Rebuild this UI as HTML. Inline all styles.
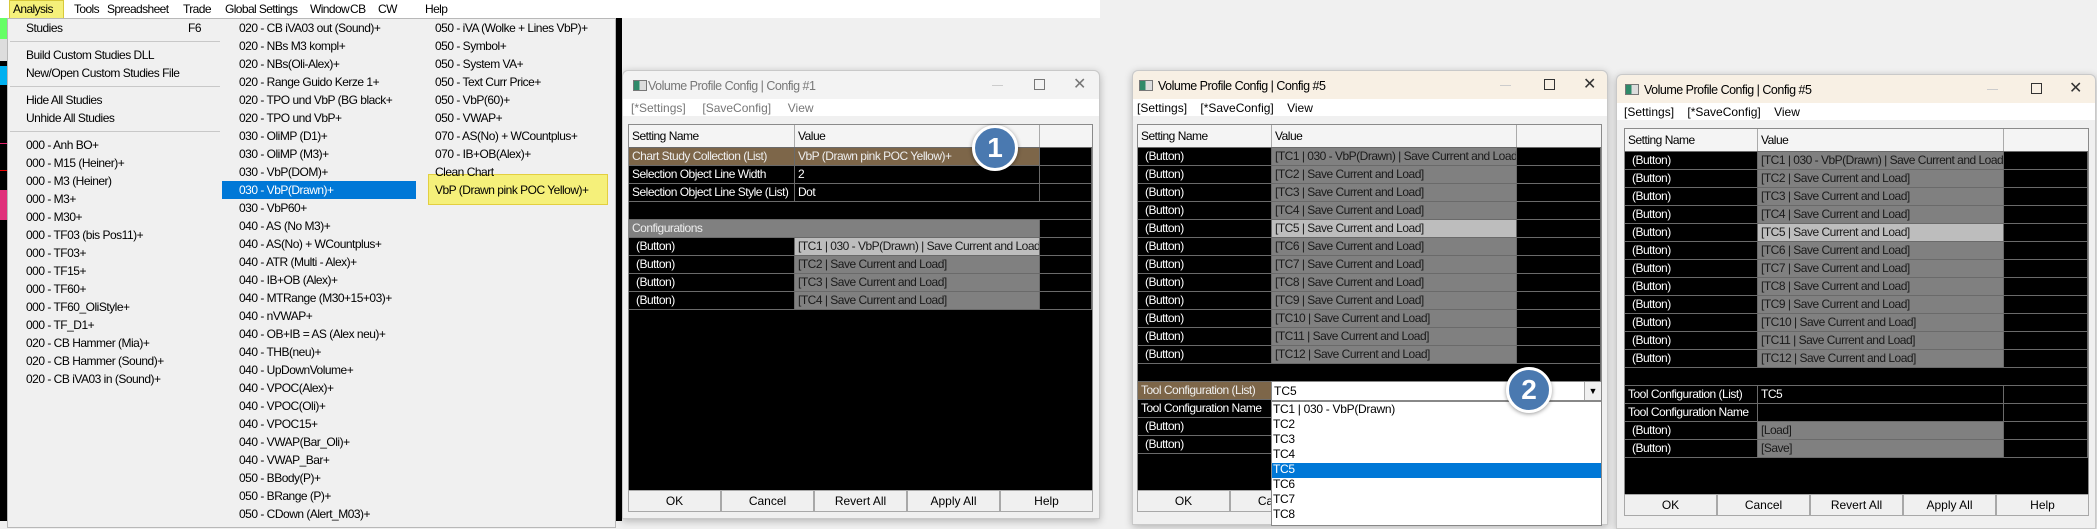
<!DOCTYPE html>
<html><head><meta charset="utf-8"><style>
*{box-sizing:border-box;margin:0;padding:0}
body{width:2097px;height:521px;background:#f0f0f0;position:relative;overflow:hidden;font-family:"Liberation Sans",Arial,sans-serif;font-size:12px;color:#000}
.a{position:absolute;white-space:nowrap}
.mb{left:0;top:0;width:1100px;height:18px;background:#fff}
.mi{top:2px;font-size:12px;letter-spacing:-0.6px}
.dd{left:7px;top:18px;width:609px;height:510px;background:#f0f0f0;border:1px solid #b8b8b8}
.it{font-size:12px;letter-spacing:-0.5px;line-height:18px;height:18px}
.ml{font-size:12px;letter-spacing:-0.5px;line-height:18px;white-space:pre}
.sep{height:1px;background:#c8c8c8;left:10px;width:210px}
.win{background:#f0f0f0;border:1px solid #c9c9c9;border-radius:6px 6px 0 0;box-shadow:0 2px 8px rgba(0,0,0,.25)}
.tb{position:absolute;left:0;right:0;top:0;height:30px;border-radius:6px 6px 0 0}
.tt{font-size:12.5px;letter-spacing:-0.5px}
.menu{position:absolute;left:0;right:0;height:17px;background:#fff}
.tbl{position:absolute;background:#000;border:1px solid #8a8a8a;letter-spacing:-0.5px}
.r{display:flex;height:18px;border-bottom:1px solid #6a6a6a}
.r div{height:17px;line-height:17px;padding-left:3px;overflow:hidden;white-space:nowrap;border-right:1px solid #6a6a6a}
.hd{background:#f4f4f4;height:23px!important}
.hd div{height:22px;line-height:22px;color:#000;border-right:1px solid #aaa}
.k{background:#000;color:#fff}
.bn{padding-left:7px!important}
.g{background:#808080;color:#1a1a1a}
.lg{background:#bdbdbd;color:#1a1a1a}
.br{background:#7d6649;color:#eee}
.btns{position:absolute;display:flex;height:22px}
.btns div{flex:1;background:#f0f0f0;border:1px solid #a8a8a8;text-align:center;line-height:20px;font-size:12px}
.badge{position:absolute;width:46px;height:46px;border-radius:50%;background:#4a79b0;border:3px solid #fff;box-shadow:0 1px 4px rgba(0,0,0,.4);color:#fff;font-weight:bold;font-size:28px;text-align:center;line-height:40px}
.ic{position:absolute;width:14px;height:11px;border:1px solid #777;background:linear-gradient(90deg,#2f8a6a 0 45%,#ddd 45%)}
.mx{position:absolute;width:11px;height:11px;border:1px solid #333}
.cl{position:absolute;font-size:16px;color:#333;line-height:16px}
.mn{position:absolute;width:11px;height:1px;background:#ccc}
</style></head><body>

<div class="a" style="left:0;top:18px;width:8px;height:503px;background:#000"></div>
<div class="a" style="left:0;top:18px;width:8px;height:21px;background:#6f6"></div>
<div class="a" style="left:0;top:39px;width:8px;height:22px;background:#ddd"></div>
<div class="a" style="left:0;top:66px;width:8px;height:19px;background:#00b0f0"></div>
<div class="a" style="left:0;top:143px;width:8px;height:1px;background:#e0206a"></div>
<div class="a" style="left:0;top:170px;width:8px;height:1px;background:#e00"></div>
<div class="a" style="left:0;top:190px;width:8px;height:30px;background:#e0307a"></div>
<div class="a" style="left:616px;top:18px;width:6px;height:503px;background:#000"></div>

<div class="a mb"></div>
<div class="a" style="left:9px;top:0;width:55px;height:19px;background:#f5f07a;border:1px solid #d8c93a"></div>
<div class="a mi" style="left:13px">Analysis</div>
<div class="a mi" style="left:74px">Tools</div>
<div class="a mi" style="left:107px">Spreadsheet</div>
<div class="a mi" style="left:183px">Trade</div>
<div class="a mi" style="left:225px">Global Settings</div>
<div class="a mi" style="left:310px">Window</div>
<div class="a mi" style="left:350px">CB</div>
<div class="a mi" style="left:378px">CW</div>
<div class="a mi" style="left:425px">Help</div>

<div class="a dd"></div>
<div class="a it" style="left:26px;top:19px">Studies</div>
<div class="a it" style="left:188px;top:19px">F6</div>
<div class="a sep" style="top:41px"></div>
<div class="a it" style="left:26px;top:46px">Build Custom Studies DLL</div>
<div class="a it" style="left:26px;top:64px">New/Open Custom Studies File</div>
<div class="a sep" style="top:86px"></div>
<div class="a it" style="left:26px;top:91px">Hide All Studies</div>
<div class="a it" style="left:26px;top:109px">Unhide All Studies</div>
<div class="a sep" style="top:131px"></div>
<div class="a ml" style="left:26px;top:136px">000 - Anh BO+
000 - M15 (Heiner)+
000 - M3 (Heiner)
000 - M3+
000 - M30+
000 - TF03 (bis Pos11)+
000 - TF03+
000 - TF15+
000 - TF60+
000 - TF60_OliStyle+
000 - TF_D1+
020 - CB Hammer (Mia)+
020 - CB Hammer (Sound)+
020 - CB iVA03 in (Sound)+</div>
<div class="a" style="left:222px;top:181px;width:194px;height:18px;background:#0078d7"></div>
<div class="a ml" style="left:239px;top:19px">020 - CB iVA03 out (Sound)+
020 - NBs M3 kompl+
020 - NBs(Oli-Alex)+
020 - Range Guido Kerze 1+
020 - TPO und VbP (BG black+
020 - TPO und VbP+
030 - OliMP (D1)+
030 - OliMP (M3)+
030 - VbP(DOM)+
<span style="color:#fff">030 - VbP(Drawn)+</span>
030 - VbP60+
040 - AS (No M3)+
040 - AS(No) + WCountplus+
040 - ATR (Multi - Alex)+
040 - IB+OB (Alex)+
040 - MTRange (M30+15+03)+
040 - nVWAP+
040 - OB+IB = AS (Alex neu)+
040 - THB(neu)+
040 - UpDownVolume+
040 - VPOC(Alex)+
040 - VPOC(Oli)+
040 - VPOC15+
040 - VWAP(Bar_Oli)+
040 - VWAP_Bar+
050 - BBody(P)+
050 - BRange (P)+
050 - CDown (Alert_M03)+</div>
<div class="a" style="left:428px;top:174px;width:180px;height:31px;background:#f5f07a;border:1px solid #e3cf40"></div>
<div class="a ml" style="left:435px;top:19px">050 - iVA (Wolke + Lines VbP)+
050 - Symbol+
050 - System VA+
050 - Text Curr Price+
050 - VbP(60)+
050 - VWAP+
070 - AS(No) + WCountplus+
070 - IB+OB(Alex)+
Clean Chart
VbP (Drawn pink POC Yellow)+</div>

<!-- WINDOW 1 -->
<div class="a win" style="left:622px;top:70px;width:478px;height:449px">
 <div class="tb" style="background:#f3f3f3"></div>
 <div class="ic" style="left:10px;top:9px"></div>
 <div class="a tt" style="left:25px;top:8px;color:#777">Volume Profile Config | Config #1</div>
 <div class="mn" style="left:369px;top:14px"></div>
 <div class="mx" style="left:411px;top:8px;border-color:#777"></div>
 <div class="cl" style="left:450px;top:6px;color:#777">✕</div>
 <div class="menu" style="top:28px"></div>
 <div class="a" style="left:8px;top:30px;color:#777">[*Settings]&nbsp;&nbsp;&nbsp;&nbsp;&nbsp;[SaveConfig]&nbsp;&nbsp;&nbsp;&nbsp;&nbsp;View</div>
</div>
<div class="tbl" style="left:628px;top:124px;width:465px;height:367px">
 <div class="r hd"><div style="width:166px">Setting Name</div><div style="width:245px">Value</div><div style="flex:1;border:0"></div></div>
 <div class="r"><div class="br" style="width:166px">Chart Study Collection (List)</div><div class="br" style="width:245px">VbP (Drawn pink POC Yellow)+</div><div class="k" style="flex:1"></div></div>
 <div class="r"><div class="k" style="width:166px">Selection Object Line Width</div><div class="k" style="width:245px">2</div><div class="k" style="flex:1"></div></div>
 <div class="r"><div class="k" style="width:166px">Selection Object Line Style (List)</div><div class="k" style="width:245px">Dot</div><div class="k" style="flex:1"></div></div>
 <div class="r"><div class="k" style="flex:1"></div></div>
 <div class="r"><div class="g" style="width:411px;color:#eee">Configurations</div><div class="k" style="flex:1"></div></div>
 <div class="r"><div class="k bn" style="width:166px">(Button)</div><div class="lg" style="width:245px">[TC1 | 030 - VbP(Drawn) | Save Current and Load]</div><div class="k" style="flex:1"></div></div>
 <div class="r"><div class="k bn" style="width:166px">(Button)</div><div class="g" style="width:245px">[TC2 | Save Current and Load]</div><div class="k" style="flex:1"></div></div>
 <div class="r"><div class="k bn" style="width:166px">(Button)</div><div class="g" style="width:245px">[TC3 | Save Current and Load]</div><div class="k" style="flex:1"></div></div>
 <div class="r"><div class="k bn" style="width:166px">(Button)</div><div class="g" style="width:245px">[TC4 | Save Current and Load]</div><div class="k" style="flex:1"></div></div>
</div>
<div class="btns" style="left:628px;top:490px;width:465px"><div>OK</div><div>Cancel</div><div>Revert All</div><div>Apply All</div><div>Help</div></div>
<div class="badge" style="left:972px;top:125px">1</div>

<!-- WINDOW 2 -->
<div class="a win" style="left:1132px;top:70px;width:476px;height:455px">
 <div class="tb" style="background:#f8f0e4"></div>
 <div class="ic" style="left:6px;top:9px"></div>
 <div class="a tt" style="left:25px;top:8px">Volume Profile Config | Config #5</div>
 <div class="mn" style="left:367px;top:14px"></div>
 <div class="mx" style="left:411px;top:8px"></div>
 <div class="cl" style="left:450px;top:6px">✕</div>
 <div class="menu" style="top:28px"></div>
 <div class="a" style="left:4px;top:30px">[Settings]&nbsp;&nbsp;&nbsp;&nbsp;[*SaveConfig]&nbsp;&nbsp;&nbsp;&nbsp;View</div>
</div>
<div class="tbl" style="left:1137px;top:124px;width:465px;height:367px">
 <div class="r hd"><div style="width:134px">Setting Name</div><div style="width:245px">Value</div><div style="flex:1;border:0"></div></div>
 <div class="r"><div class="k bn" style="width:134px">(Button)</div><div class="g" style="width:245px">[TC1 | 030 - VbP(Drawn) | Save Current and Load]</div><div class="k" style="flex:1"></div></div>
 <div class="r"><div class="k bn" style="width:134px">(Button)</div><div class="g" style="width:245px">[TC2 | Save Current and Load]</div><div class="k" style="flex:1"></div></div>
 <div class="r"><div class="k bn" style="width:134px">(Button)</div><div class="g" style="width:245px">[TC3 | Save Current and Load]</div><div class="k" style="flex:1"></div></div>
 <div class="r"><div class="k bn" style="width:134px">(Button)</div><div class="g" style="width:245px">[TC4 | Save Current and Load]</div><div class="k" style="flex:1"></div></div>
 <div class="r"><div class="k bn" style="width:134px">(Button)</div><div class="lg" style="width:245px">[TC5 | Save Current and Load]</div><div class="k" style="flex:1"></div></div>
 <div class="r"><div class="k bn" style="width:134px">(Button)</div><div class="g" style="width:245px">[TC6 | Save Current and Load]</div><div class="k" style="flex:1"></div></div>
 <div class="r"><div class="k bn" style="width:134px">(Button)</div><div class="g" style="width:245px">[TC7 | Save Current and Load]</div><div class="k" style="flex:1"></div></div>
 <div class="r"><div class="k bn" style="width:134px">(Button)</div><div class="g" style="width:245px">[TC8 | Save Current and Load]</div><div class="k" style="flex:1"></div></div>
 <div class="r"><div class="k bn" style="width:134px">(Button)</div><div class="g" style="width:245px">[TC9 | Save Current and Load]</div><div class="k" style="flex:1"></div></div>
 <div class="r"><div class="k bn" style="width:134px">(Button)</div><div class="g" style="width:245px">[TC10 | Save Current and Load]</div><div class="k" style="flex:1"></div></div>
 <div class="r"><div class="k bn" style="width:134px">(Button)</div><div class="g" style="width:245px">[TC11 | Save Current and Load]</div><div class="k" style="flex:1"></div></div>
 <div class="r"><div class="k bn" style="width:134px">(Button)</div><div class="g" style="width:245px">[TC12 | Save Current and Load]</div><div class="k" style="flex:1"></div></div>
 <div class="r"><div class="k" style="flex:1"></div></div>
 <div class="r"><div class="br" style="width:134px">Tool Configuration (List)</div><div class="k" style="flex:1"></div></div>
 <div class="r"><div class="k" style="width:134px">Tool Configuration Name</div><div class="k" style="flex:1"></div></div>
 <div class="r"><div class="k bn" style="width:134px">(Button)</div><div class="k" style="flex:1"></div></div>
 <div class="r"><div class="k bn" style="width:134px">(Button)</div><div class="k" style="flex:1"></div></div>
</div>
<div class="btns" style="left:1137px;top:490px;width:465px"><div>OK</div><div>Cancel</div><div>Revert All</div><div>Apply All</div><div>Help</div></div>
<div class="a" style="left:1271px;top:381px;width:331px;height:20px;background:#fff;border:1px solid #888"></div>
<div class="a" style="left:1274px;top:384px">TC5</div>
<div class="a" style="left:1584px;top:382px;width:17px;height:18px;background:#f0f0f0;border-left:1px solid #aaa;text-align:center;font-size:9px;line-height:18px">▼</div>
<div class="a" style="left:1271px;top:401px;width:331px;height:125px;background:#fff;border:1px solid #888"></div>
<div class="a" style="left:1272px;top:463px;width:329px;height:15px;background:#0078d7"></div>
<div class="a" style="left:1273px;top:402px;line-height:15px;white-space:pre;letter-spacing:-0.3px">TC1 | 030 - VbP(Drawn)
TC2
TC3
TC4
<span style="color:#fff">TC5</span>
TC6
TC7
TC8</div>
<div class="badge" style="left:1506px;top:367px">2</div>

<!-- WINDOW 3 -->
<div class="a win" style="left:1616px;top:74px;width:480px;height:455px">
 <div class="tb" style="background:#f8f0e4"></div>
 <div class="ic" style="left:8px;top:9px"></div>
 <div class="a tt" style="left:27px;top:8px">Volume Profile Config | Config #5</div>
 <div class="mn" style="left:370px;top:14px"></div>
 <div class="mx" style="left:414px;top:8px"></div>
 <div class="cl" style="left:452px;top:6px">✕</div>
 <div class="menu" style="top:28px"></div>
 <div class="a" style="left:7px;top:30px">[Settings]&nbsp;&nbsp;&nbsp;&nbsp;[*SaveConfig]&nbsp;&nbsp;&nbsp;&nbsp;View</div>
</div>
<div class="tbl" style="left:1624px;top:128px;width:465px;height:367px">
 <div class="r hd"><div style="width:133px">Setting Name</div><div style="width:246px">Value</div><div style="flex:1;border:0"></div></div>
 <div class="r"><div class="k bn" style="width:133px">(Button)</div><div class="g" style="width:246px">[TC1 | 030 - VbP(Drawn) | Save Current and Load]</div><div class="k" style="flex:1"></div></div>
 <div class="r"><div class="k bn" style="width:133px">(Button)</div><div class="g" style="width:246px">[TC2 | Save Current and Load]</div><div class="k" style="flex:1"></div></div>
 <div class="r"><div class="k bn" style="width:133px">(Button)</div><div class="g" style="width:246px">[TC3 | Save Current and Load]</div><div class="k" style="flex:1"></div></div>
 <div class="r"><div class="k bn" style="width:133px">(Button)</div><div class="g" style="width:246px">[TC4 | Save Current and Load]</div><div class="k" style="flex:1"></div></div>
 <div class="r"><div class="k bn" style="width:133px">(Button)</div><div class="lg" style="width:246px">[TC5 | Save Current and Load]</div><div class="k" style="flex:1"></div></div>
 <div class="r"><div class="k bn" style="width:133px">(Button)</div><div class="g" style="width:246px">[TC6 | Save Current and Load]</div><div class="k" style="flex:1"></div></div>
 <div class="r"><div class="k bn" style="width:133px">(Button)</div><div class="g" style="width:246px">[TC7 | Save Current and Load]</div><div class="k" style="flex:1"></div></div>
 <div class="r"><div class="k bn" style="width:133px">(Button)</div><div class="g" style="width:246px">[TC8 | Save Current and Load]</div><div class="k" style="flex:1"></div></div>
 <div class="r"><div class="k bn" style="width:133px">(Button)</div><div class="g" style="width:246px">[TC9 | Save Current and Load]</div><div class="k" style="flex:1"></div></div>
 <div class="r"><div class="k bn" style="width:133px">(Button)</div><div class="g" style="width:246px">[TC10 | Save Current and Load]</div><div class="k" style="flex:1"></div></div>
 <div class="r"><div class="k bn" style="width:133px">(Button)</div><div class="g" style="width:246px">[TC11 | Save Current and Load]</div><div class="k" style="flex:1"></div></div>
 <div class="r"><div class="k bn" style="width:133px">(Button)</div><div class="g" style="width:246px">[TC12 | Save Current and Load]</div><div class="k" style="flex:1"></div></div>
 <div class="r"><div class="k" style="flex:1"></div></div>
 <div class="r"><div class="k" style="width:133px">Tool Configuration (List)</div><div class="k" style="width:246px">TC5</div><div class="k" style="flex:1"></div></div>
 <div class="r"><div class="k" style="width:133px">Tool Configuration Name</div><div class="k" style="width:246px"></div><div class="k" style="flex:1"></div></div>
 <div class="r"><div class="k bn" style="width:133px">(Button)</div><div class="g" style="width:246px">[Load]</div><div class="k" style="flex:1"></div></div>
 <div class="r"><div class="k bn" style="width:133px">(Button)</div><div class="g" style="width:246px">[Save]</div><div class="k" style="flex:1"></div></div>
</div>
<div class="btns" style="left:1624px;top:494px;width:465px"><div>OK</div><div>Cancel</div><div>Revert All</div><div>Apply All</div><div>Help</div></div>

</body></html>
